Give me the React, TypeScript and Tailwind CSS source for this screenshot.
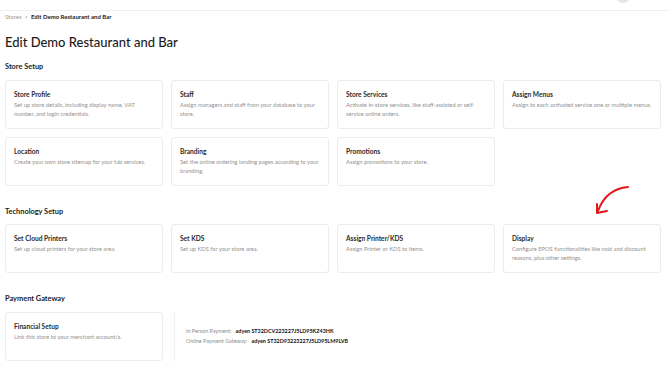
import { Fragment } from 'react'

type Setting = {
  title: string
  description: string
}

const storeSetup: Setting[] = [
  { title: 'Store Profile', description: 'Set up store details, including display name, VAT number, and login credentials.' },
  { title: 'Staff', description: 'Assign managers and staff from your database to your store.' },
  { title: 'Store Services', description: 'Activate in-store services, like staff-assisted or self-service online orders.' },
  { title: 'Assign Menus', description: 'Assign to each activated service one or multiple menus.' },
  { title: 'Location', description: 'Create your own store sitemap for your tab services.' },
  { title: 'Branding', description: 'Set the online ordering landing pages according to your branding.' },
  { title: 'Promotions', description: 'Assign promotions to your store.' },
]

const technologySetup: Setting[] = [
  { title: 'Set Cloud Printers', description: 'Set up cloud printers for your store area.' },
  { title: 'Set KDS', description: 'Set up KDS for your store area.' },
  { title: 'Assign Printer/KDS', description: 'Assign Printer or KDS to items.' },
  { title: 'Display', description: 'Configure EPOS functionalities like void and discount reasons, plus other settings.' },
]

const SettingCard = ({ setting }: { setting: Setting }) => (
  <div className="h-[49px] rounded-[3px] border border-[#ececec] bg-white px-[8px] pt-[9px]">
    <h3 className="text-[6.6px] font-bold leading-[9px] text-[#2b2b2b]">{setting.title}</h3>
    <p className="mt-[2px] text-[5.75px] leading-[8.5px] text-[#939393]">{setting.description}</p>
  </div>
)

const SectionTitle = ({ children }: { children: string }) => (
  <h2 className="text-[7.4px] font-bold leading-[10px] text-[#222]">{children}</h2>
)

export default function App() {
  return (
    <div className="relative h-[371px] w-[670px] overflow-hidden bg-white font-['Lato',sans-serif]">
      <header className="flex h-[11px] justify-end border-b border-[#f0f0f0] pr-[40px]">
        <div className="-mt-[11px] h-[14px] w-[14px] rounded-full bg-[#e6e6e6]" />
      </header>

      <main className="pl-[5px]">
        <nav className="mt-[2px] flex items-center gap-[3px] text-[6px] leading-[8px]">
          <span className="text-[#9a9a9a]">Stores</span>
          <span className="text-[#9a9a9a]">&gt;</span>
          <span className="font-bold text-[#222]">Edit Demo Restaurant and Bar</span>
        </nav>

        <h1 className="mt-[13px] text-[13px] font-medium leading-[16px] text-[#1c1c1c]">Edit Demo Restaurant and Bar</h1>

        <section className="mt-[12px]">
          <SectionTitle>Store Setup</SectionTitle>
          <div className="mt-[8px] grid w-[656px] grid-cols-4 gap-[8px]">
            {storeSetup.map((setting) => (
              <SettingCard key={setting.title} setting={setting} />
            ))}
          </div>
        </section>

        <section className="mt-[21px]">
          <SectionTitle>Technology Setup</SectionTitle>
          <div className="mt-[7px] grid w-[656px] grid-cols-4 gap-[8px]">
            {technologySetup.map((setting) => (
              <SettingCard key={setting.title} setting={setting} />
            ))}
          </div>
        </section>

        <section className="mt-[21px]">
          <SectionTitle>Payment Gateway</SectionTitle>
          <div className="mt-[8px] flex">
            <div className="w-[158px]">
              <SettingCard setting={{ title: 'Financial Setup', description: 'Link this store to your merchant account/s.' }} />
            </div>
            <div className="ml-[11px] flex h-[49px] flex-col justify-center border-l border-[#f0f0f0] pl-[11px] text-[5.4px] leading-[9.5px]">
              {[
                ['In Person Payment:', 'adyen ST32DCV223227J5LD95KZ43HK'],
                ['Online Payment Gateway:', 'adyen ST32D93223227J5LD95LM9LVB'],
              ].map(([label, value]) => (
                <Fragment key={label}>
                  <p>
                    <span className="text-[#8d8d8d]">{label}</span>
                    <span className="ml-[4px] text-[5.4px] font-bold text-[#111]">{value}</span>
                  </p>
                </Fragment>
              ))}
            </div>
          </div>
        </section>
      </main>

      <svg className="absolute left-[590px] top-[182px]" width="44" height="36" viewBox="590 182 44 36" fill="none">
        <path d="M628 187 Q606 189 598 211" stroke="#e3161b" strokeWidth="2" strokeLinecap="round" />
        <path d="M597 204 L597 213 L607 211" stroke="#e3161b" strokeWidth="2" strokeLinecap="round" strokeLinejoin="round" />
      </svg>
    </div>
  )
}
